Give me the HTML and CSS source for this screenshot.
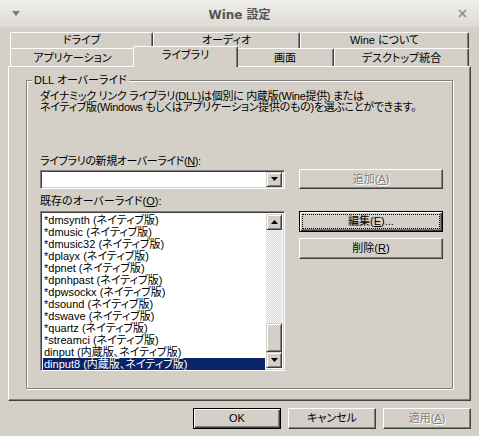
FILE: index.html
```html
<!DOCTYPE html>
<html lang="ja">
<head>
<meta charset="utf-8">
<title>Wine 設定</title>
<link rel="stylesheet" href="styles.css">
</head>
<body>
<div class="window">
  <div class="titlebar">
    <span class="tb-menu"><svg width="8" height="5" viewBox="0 0 8 5"><path d="M0 0H8L4 5Z" fill="#7a7a7a"/></svg></span>
    <span class="tb-title">Wine 設定</span>
    <span class="tb-close"><svg width="9" height="9" viewBox="0 0 9 9"><path d="M1 1L8 8M8 1L1 8" stroke="#8a8a8a" stroke-width="1.6"/></svg></span>
  </div>
  <div class="client">
    <div class="tabs">
      <div class="tabrow back">
        <div class="tab w-drive">ドライブ</div>
        <div class="tab w-audio">オーディオ</div>
        <div class="tab w-about">Wine について</div>
      </div>
      <div class="tabrow front">
        <div class="tab w-apps">アプリケーション</div>
        <div class="tab w-libs selected">ライブラリ</div>
        <div class="tab w-graph">画面</div>
        <div class="tab w-desk">デスクトップ統合</div>
      </div>
    </div>
    <div class="panel">
      <div class="group">
        <div class="legend">DLL オーバーライド</div>
        <p class="desc">ダイナミック リンク ライブラリ(DLL)は個別に 内蔵版(Wine提供) または<br>ネイティブ版(Windows もしくはアプリケーション提供のもの)を選ぶことができます。</p>
        <div class="label label-new">ライブラリの新規オーバーライド(<u>N</u>):</div>
        <div class="row row-new">
          <div class="combo">
            <div class="combo-field"></div>
            <div class="arrowbtn"><svg width="7" height="4" viewBox="0 0 7 4"><path d="M0 0H7L3.5 4Z" fill="#000"/></svg></div>
          </div>
          <button class="btn disabled w-side">追加(<u>A</u>)</button>
        </div>
        <div class="label label-old">既存のオーバーライド(<u>O</u>):</div>
        <div class="row row-old">
          <div class="listbox">
            <ul class="items">
              <li>*dmsynth (ネイティブ版)</li>
              <li>*dmusic (ネイティブ版)</li>
              <li>*dmusic32 (ネイティブ版)</li>
              <li>*dplayx (ネイティブ版)</li>
              <li>*dpnet (ネイティブ版)</li>
              <li>*dpnhpast (ネイティブ版)</li>
              <li>*dpwsockx (ネイティブ版)</li>
              <li>*dsound (ネイティブ版)</li>
              <li>*dswave (ネイティブ版)</li>
              <li>*quartz (ネイティブ版)</li>
              <li>*streamci (ネイティブ版)</li>
              <li>dinput (内蔵版、ネイティブ版)</li>
              <li class="sel">dinput8 (内蔵版、ネイティブ版)</li>
            </ul>
            <div class="vscroll">
              <div class="arrowbtn"><svg width="7" height="4" viewBox="0 0 7 4"><path d="M0 4H7L3.5 0Z" fill="#000"/></svg></div>
              <div class="track"><div class="thumb"></div></div>
              <div class="arrowbtn"><svg width="7" height="4" viewBox="0 0 7 4"><path d="M0 0H7L3.5 4Z" fill="#000"/></svg></div>
            </div>
          </div>
          <div class="btncol">
            <button class="btn default w-side"><span class="focus">編集(<u>E</u>)...</span></button>
            <button class="btn w-side">削除(<u>R</u>)</button>
          </div>
        </div>
      </div>
    </div>
    <div class="footer">
      <button class="btn default w-foot">OK</button>
      <button class="btn w-foot">キャンセル</button>
      <button class="btn disabled w-foot">適用(<u>A</u>)</button>
    </div>
  </div>
</div>
</body>
</html>
```
FILE: styles.css
```css
* { box-sizing: border-box; margin: 0; padding: 0; }
html, body { width: 479px; height: 436px; overflow: hidden; }
body {
  font-family: "Liberation Sans", "Noto Sans CJK JP", sans-serif;
  font-size: 11px;
  color: #000;
  background: #d4d0c8;
  font-feature-settings: "palt";
}
u { text-decoration: underline; text-underline-offset: 1px; }

.window { width: 479px; height: 436px; display: flex; flex-direction: column; background: #d4d0c8; }

.titlebar {
  height: 27px;
  display: grid;
  grid-template-columns: 1fr auto 1fr;
  align-items: center;
  padding: 0 12px 0 12px;
  background: linear-gradient(#efeeeb, #dddbd6);
}
.tb-menu { display: flex; }
.tb-close { display: flex; justify-content: flex-end; }
.tb-title {
  font-family: "DejaVu Sans", "Noto Sans CJK JP", sans-serif;
  font-weight: bold;
  font-size: 12px;
  color: #555;
  font-feature-settings: normal;
}

.client { flex: 1; display: flex; flex-direction: column; padding-top: 5px; }

.tabs { margin-left: 10px; width: 459px; }
.tabrow { display: flex; }
.tabrow.back { height: 16px; }
.tabrow.front { height: 18px; }
.tab {
  display: flex;
  align-items: center;
  justify-content: center;
  background: #d4d0c8;
  border-left: 1px solid #fff;
  border-top: 1px solid #fff;
  border-right: 1px solid #404040;
  box-shadow: inset -1px 0 #808080;
  border-radius: 2px 2px 0 0;
  line-height: 13px;
  white-space: nowrap;
}
.tabrow.back .tab { height: 16px; padding-bottom: 1px; }
.tabrow.front .tab { height: 18px; padding-top: 1px; }
.tabrow.front .tab.selected {
  height: 21px;
  margin: -2px -2px 0 -2px;
  padding-top: 0;
  padding-bottom: 3px;
  position: relative;
  z-index: 1;
}
.w-drive { width: 143px; }
.w-audio { width: 147px; }
.w-about { width: 169px; }
.w-apps { width: 125px; }
.w-libs { width: 105px; }
.w-graph { width: 98px; }
.w-desk { width: 135px; }

.panel {
  margin-left: 8px;
  width: 463px;
  height: 335px;
  border-top: 1px solid #fff;
  border-left: 1px solid #fff;
  border-right: 1px solid #404040;
  border-bottom: 1px solid #404040;
  box-shadow: inset -1px -1px #808080;
  padding: 13px 0 0 17px;
}

.group {
  position: relative;
  width: 427px;
  height: 309px;
  border: 1px solid #808080;
  box-shadow: 1px 1px 0 #fff, inset 1px 1px 0 #fff;
  padding: 10px 9px 0 13px;
}
.legend {
  position: absolute;
  top: -7px;
  left: 5px;
  padding: 0 2px;
  background: #d4d0c8;
  line-height: 12px;
  white-space: nowrap;
}
.desc { line-height: 11px; white-space: nowrap; letter-spacing: -0.3px; }
.label { line-height: 12px; white-space: nowrap; }
.label-new { margin-top: 42px; letter-spacing: -0.4px; }
.label-old { margin-top: 6px; }

.row { display: flex; justify-content: space-between; }
.row-new { margin-top: 2px; align-items: center; height: 20px; }
.row-old { margin-top: 4px; }

.combo {
  width: 245px;
  height: 19px;
  display: flex;
  border: 1px solid;
  border-color: #808080 #fff #fff #808080;
  box-shadow: inset 1px 1px #404040, inset -1px -1px #d4d0c8;
  background: #fff;
  padding: 2px;
  justify-content: flex-end;
}
.combo .arrowbtn { width: 16px; height: 15px; margin-top: -1px; }

.arrowbtn {
  width: 16px;
  height: 16px;
  display: flex;
  align-items: center;
  justify-content: center;
  background: #d4d0c8;
  border: 1px solid;
  border-color: #d4d0c8 #404040 #404040 #d4d0c8;
  box-shadow: inset 1px 1px #fff, inset -1px -1px #808080;
}

.btn {
  font: inherit;
  color: #000;
  display: flex;
  align-items: center;
  justify-content: center;
  background: #d4d0c8;
  border: 1px solid;
  border-color: #fff #404040 #404040 #fff;
  box-shadow: inset -1px -1px #808080;
  height: 21px;
  line-height: 13px;
  white-space: nowrap;
}
.btn.disabled { color: #808080; text-shadow: 1px 1px 0 #fff; }
.btn.default {
  border: 1px solid #000;
  box-shadow: inset 1px 1px #fff, inset -1px -1px #404040, inset -2px -2px #808080;
}
.btn .focus {
  display: flex;
  align-items: center;
  justify-content: center;
  width: calc(100% - 6px);
  height: calc(100% - 6px);
  outline: 1px dotted #000;
}
.w-side { width: 144px; }
.row-new .btn { height: 20px; }
.btncol { display: flex; flex-direction: column; gap: 6px; }

.listbox {
  width: 245px;
  height: 160px;
  display: flex;
  border: 1px solid;
  border-color: #808080 #fff #fff #808080;
  box-shadow: inset 1px 1px #404040, inset -1px -1px #d4d0c8;
  background: #fff;
  padding: 2px;
}
.items { list-style: none; flex: 1; margin-right: 1px; }
.items li { height: 12px; line-height: 12px; padding-left: 1px; white-space: nowrap; }
.items li.sel { background: #0a246a; color: #fff; }
.vscroll { width: 16px; display: flex; flex-direction: column; }
.track {
  flex: 1;
  display: flex;
  flex-direction: column;
  justify-content: flex-end;
  background: repeating-conic-gradient(#d4d0c8 0 25%, #fff 0 50%) 0 0 / 2px 2px;
}
.thumb {
  height: 29px;
  background: #d4d0c8;
  border: 1px solid;
  border-color: #d4d0c8 #404040 #404040 #d4d0c8;
  box-shadow: inset 1px 1px #fff, inset -1px -1px #808080;
}

.footer {
  display: flex;
  justify-content: flex-end;
  gap: 7px;
  margin-top: 7px;
  padding-right: 8px;
}
.w-foot { width: 88px; }
```
